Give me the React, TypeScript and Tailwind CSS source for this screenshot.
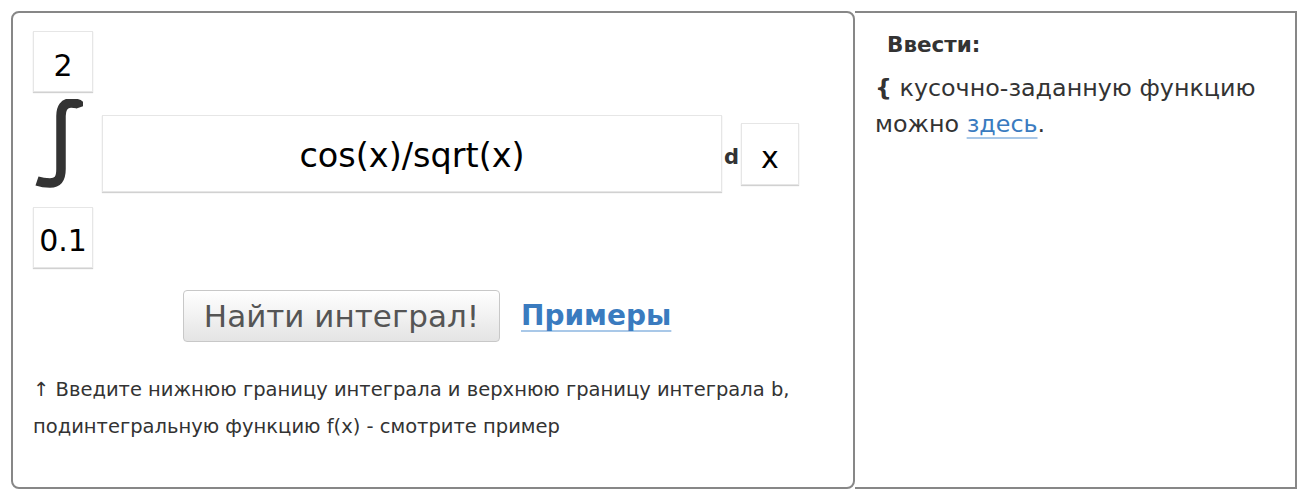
import React from "react";

const font = { fontFamily: '"DejaVu Sans", Verdana, sans-serif' };

function IntegralSign() {
  return (
    <svg width="48" height="90" viewBox="0 0 48 90" className="block">
      <path
        d="M46 8 C45 5 41 4 36 4 C29 4 26 9 26 17 L26 70 C26 80 23 84 15 84 C9 84 5 83 2 82"
        fill="none"
        stroke="#333"
        strokeWidth="9.5"
      />
    </svg>
  );
}

export default function App() {
  return (
    <div className="w-[1312px] h-[502px] bg-white text-[#333]" style={font}>
      <div className="flex pt-[11px] pl-[11px]">
        <div className="w-[844px] h-[478px] border-2 border-[#878787] rounded-[8px] pl-[20px] pt-[18px]">
          <div className="w-[60px] h-[61px] pt-[7px] border border-[#e6e6e6] shadow-[0_1px_1px_rgba(0,0,0,0.18)] flex items-center justify-center text-[30px] text-black">
            2
          </div>
          <div className="flex items-start h-[115px]">
            <div className="mt-[7px] ml-[2px] w-[48px]">
              <IntegralSign />
            </div>
            <div className="ml-[19px] mt-[23px] w-[620px] h-[77px] pt-[5px] border border-[#e6e6e6] shadow-[0_1px_1px_rgba(0,0,0,0.18)] flex items-center justify-center text-[33.5px] text-black">
              cos(x)/sqrt(x)
            </div>
            <div className="mt-[55px] ml-[2px] text-[21px] font-bold leading-none w-[17px]">d</div>
            <div className="mt-[31px] w-[58px] h-[62px] pt-[6px] border border-[#e6e6e6] shadow-[0_1px_1px_rgba(0,0,0,0.18)] flex items-center justify-center text-[30px] text-black">
              x
            </div>
          </div>
          <div className="w-[60px] h-[61px] pt-[6px] border border-[#e6e6e6] shadow-[0_1px_1px_rgba(0,0,0,0.18)] flex items-center justify-center text-[30px] text-black">
            0.1
          </div>
          <div className="flex items-center mt-[22px] ml-[150px]">
            <button className="w-[317px] h-[52px] rounded-[4px] border border-[#c8c8c8] bg-gradient-to-b from-[#ffffff] to-[#e4e4e4] text-[31px] text-[#555] flex items-center justify-center" style={font}>
              Найти интеграл!
            </button>
            <a className="ml-[21px] text-[28px] font-bold text-[#3a7bbf] underline decoration-[#a9c8e8] decoration-2 underline-offset-[5px] [text-decoration-skip-ink:none]">
              Примеры
            </a>
          </div>
          <div className="mt-[29px] text-[19.5px] leading-[37px] text-[#333]">
            <div>↑ Введите нижнюю границу интеграла и верхнюю границу интеграла b,</div>
            <div>подинтегральную функцию f(x) - смотрите пример</div>
          </div>
        </div>
        <div className="w-[442px] h-[478px] border-t-2 border-r-2 border-b-2 border-[#878787] pl-[20px] pt-[17px]">
          <div className="ml-[12px] text-[21.5px] font-bold leading-[30px]">Ввести:</div>
          <div className="mt-[10px] text-[23.8px] leading-[36px]">
            <div>
              <span className="font-bold">{"{"}</span> кусочно-заданную функцию
            </div>
            <div>
              можно{" "}
              <a className="text-[#3a7bbf] underline decoration-[#a9c8e8] decoration-2 underline-offset-[5px] [text-decoration-skip-ink:none]">здесь</a>.
            </div>
          </div>
        </div>
      </div>
    </div>
  );
}
